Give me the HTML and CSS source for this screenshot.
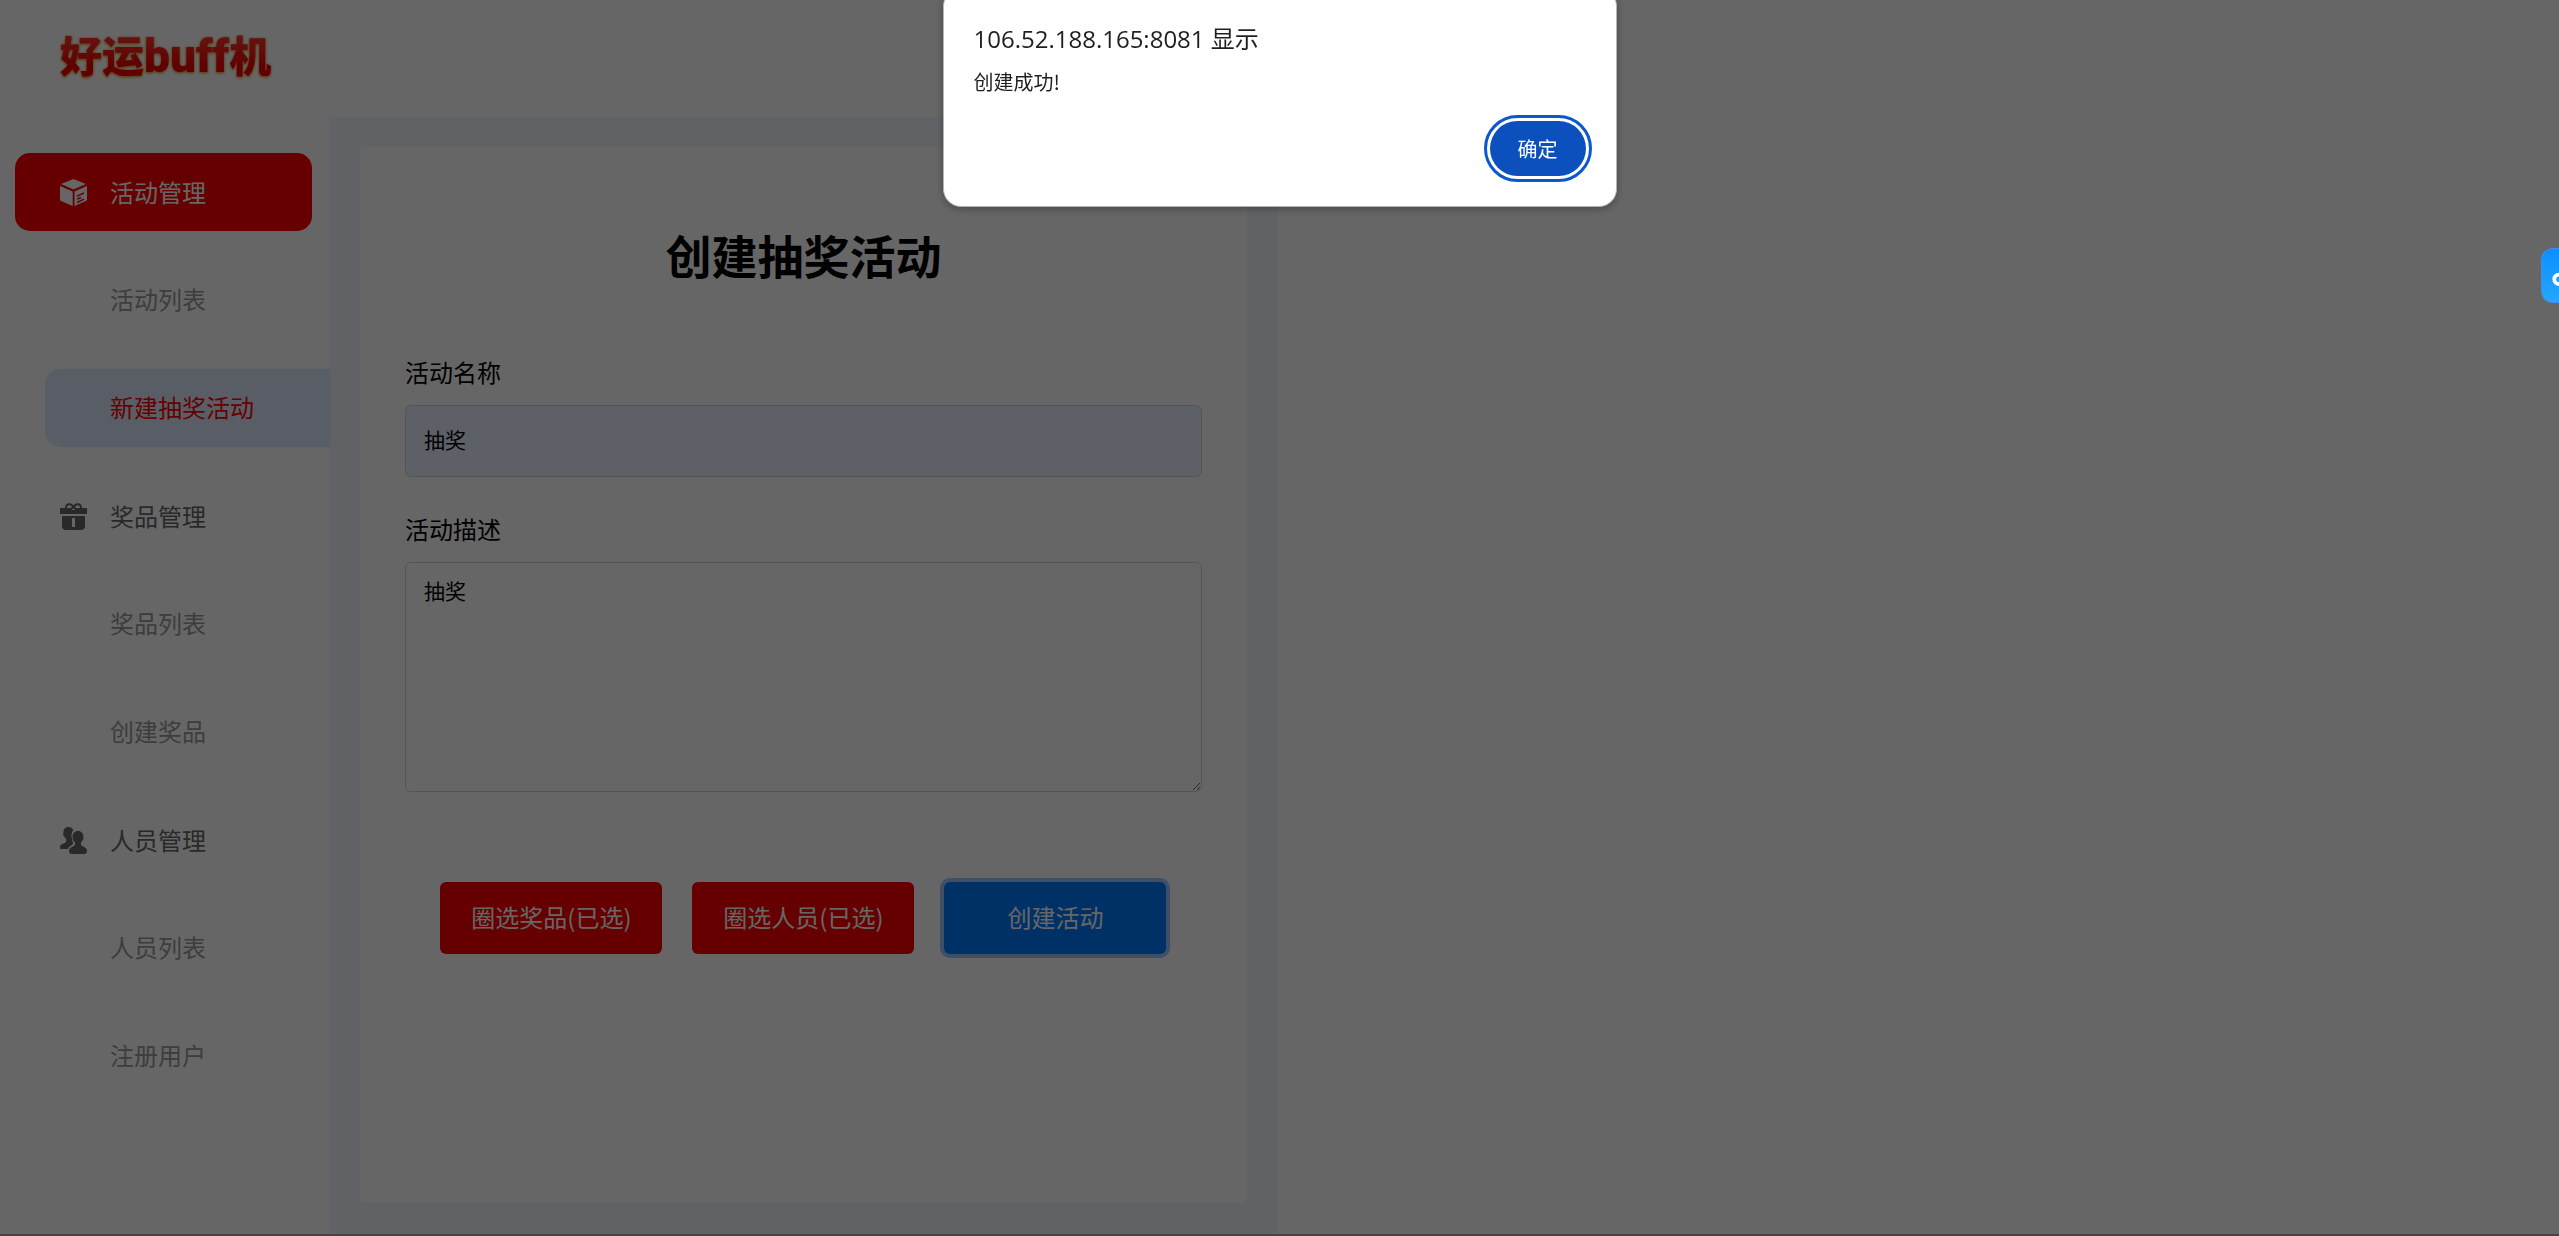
FILE: index.html
```html
<!DOCTYPE html>
<html lang="zh-CN">
<head>
  <meta charset="UTF-8">
  <meta name="viewport" content="width=device-width, initial-scale=1.0">
  <title>好运buff机</title>
  <link rel="stylesheet" href="styles.css">
</head>
<body>
<div class="page">
  <header class="header">
    <span class="logo">好运<b>buff</b>机</span>
  </header>
  <div class="container">
    <nav class="sidebar">
      <a href="#" class="nav-item active">
        <svg class="nav-icon" viewBox="0 0 27 27">
          <path d="M13.500 0 26 5 13.500 10.500 1 5Z"/>
          <path d="M0 7 12.700 12.400V27L0 21.500Z"/>
          <path d="M14.500 12.400 27 7V21.500L14.500 27Z"/>
          <path class="cut" d="M17 17.200 24 14M17 20.200 21 18.500M17 23.500 24 20.200"/>
        </svg>
        活动管理
      </a>
      <a href="#" class="nav-item sub">活动列表</a>
      <a href="#" class="nav-item sub current">新建抽奖活动</a>
      <a href="#" class="nav-item">
        <svg class="nav-icon" viewBox="0 0 27 27">
          <path class="bow" d="M13.500 5C12 0 6 0 6 5M13.500 5C15 0 21 0 21 5M13.500 4 10 7M13.500 4 17 7"/>
          <path d="M0 5H12V11H0ZM15 5H27V11H15ZM12 7H15V11H12Z"/>
          <path fill-rule="evenodd" d="M2 13H25V23Q25 27 21 27H6Q2 27 2 23ZM12 15V24H15V15Z"/>
        </svg>
        奖品管理
      </a>
      <a href="#" class="nav-item sub">奖品列表</a>
      <a href="#" class="nav-item sub">创建奖品</a>
      <a href="#" class="nav-item">
        <svg class="nav-icon" viewBox="0 0 27 27">
          <path d="M8.500 0C11 0 12.500 1 13.300 3 11.500 5 11 8 12 12 12.300 14 12.800 15 13.200 16 13 18 9 19 8 22H1C0 22 0 21 0 20 0 17 3 17 5.500 15.500 6.500 15 6.500 13 6 12 4 9 2.500 8 3.500 5 3.500 2 5.500 0 8.500 0Z"/>
          <path d="M18 4C21.500 4 23.500 6.500 23.500 10 23.500 12.500 22.500 14 21 15.500 20.500 18 21 18.500 23 19.500 25.500 20.500 27 21.500 27 24 27 26 26 27 24 27H12C10 27 9 26 9 24 9 21.500 10.500 20.500 13 19.500 15 18.500 15.500 18 15 15.500 13.500 14 12.500 12.500 12.500 10 12.500 6.500 14.500 4 18 4Z"/>
        </svg>
        人员管理
      </a>
      <a href="#" class="nav-item sub">人员列表</a>
      <a href="#" class="nav-item sub">注册用户</a>
    </nav>
    <main class="content">
      <form class="card">
        <h2>创建抽奖活动</h2>
        <div class="form-group">
          <label for="activityName">活动名称</label>
          <input type="text" id="activityName" value="抽奖">
        </div>
        <div class="form-group">
          <label for="description">活动描述</label>
          <textarea id="description">抽奖</textarea>
        </div>
        <div class="btn-group">
          <button type="button" class="btn btn-red">圈选奖品(已选)</button>
          <button type="button" class="btn btn-red">圈选人员(已选)</button>
          <button type="button" class="btn btn-blue">创建活动</button>
        </div>
      </form>
    </main>
  </div>
</div>

<div class="mask"></div>

<dialog class="alert" open>
  <h1>106.52.188.165:8081 显示</h1>
  <p>创建成功!</p>
  <button type="button" class="alert-ok">确定</button>
</dialog>

<button type="button" class="float-btn" aria-label="助手">
  <svg viewBox="0 0 18 54">
    <circle cx="18" cy="31" r="5"/>
  </svg>
</button>
</body>
</html>
```
FILE: styles.css
```css
* {
  box-sizing: border-box;
  margin: 0;
  padding: 0;
}
body {
  font-family: "Noto Sans CJK SC", sans-serif;
  font-size: 24px;
  line-height: 36px;
  background: #fff;
  overflow: hidden;
}
button, input, textarea {
  font-family: inherit;
}
.page {
  display: flex;
  flex-direction: column;
  min-height: 100vh;
  border-bottom: 2px solid #b2a8ad;
}
.header {
  display: flex;
  align-items: center;
  height: 117px;
  padding: 0 60px 8px;
}
.logo {
  font-size: 42px;
  font-weight: 900;
  line-height: 60px;
  color: transparent;
  background: linear-gradient(#ff3030 20%, #f00000 70%);
  -webkit-background-clip: text;
  background-clip: text;
  filter: drop-shadow(0 1px 1px #e8a040) drop-shadow(0 0 1px #e8b060);
}
.logo b {
  font-family: Roboto, sans-serif;
  font-size: 46px;
  font-weight: 900;
}
.container {
  display: flex;
  flex: 1;
}

/* left menu */
.sidebar {
  display: flex;
  flex-direction: column;
  gap: 30px;
  width: 330px;
  padding-top: 36px;
}
.nav-item {
  display: flex;
  align-items: center;
  gap: 23px;
  height: 78px;
  margin: 0 18px 0 15px;
  padding-left: 45px;
  border-radius: 15px;
  color: #666;
  text-decoration: none;
}
.nav-item.active {
  background: #ff0000;
  color: #fff;
}
.nav-item.sub {
  margin: 0 0 0 45px;
  padding: 0 0 2px 65px;
  border-radius: 15px 0 0 15px;
  color: #999;
}
.nav-item.current {
  background: #deebff;
  color: #ff0000;
}
.nav-icon {
  width: 27px;
  height: 27px;
  fill: currentColor;
}
.nav-icon .cut {
  fill: none;
  stroke: #ff0000;
  stroke-width: 1.4;
}
.nav-icon .bow {
  fill: none;
  stroke: currentColor;
  stroke-width: 2;
}

/* form */
.content {
  display: flex;
  width: 37vw;
  margin-bottom: 1px;
  padding: 30px;
  background: #f3f6ff;
}
.card {
  flex: 1;
  padding: 80px 45px 0;
  background: #fff;
  border-radius: 6px;
}
.card h2 {
  margin-bottom: 73px;
  font-size: 46px;
  line-height: 54px;
  text-align: center;
}
.form-group {
  margin-bottom: 34px;
}
.form-group label {
  display: block;
  margin-bottom: 15px;
}
.form-group input,
.form-group textarea {
  display: block;
  width: 100%;
  padding: 11px 18px;
  border: 1px solid #ced4da;
  border-radius: 6px;
  font-size: 21px;
  line-height: 32px;
}
.form-group input {
  height: 72px;
  padding-bottom: 15px;
  background: #e8f0fe;
}
.form-group textarea {
  height: 230px;
  resize: vertical;
}
.btn-group {
  display: flex;
  justify-content: center;
  gap: 30px;
  padding-top: 56px;
}
.btn {
  width: 222px;
  height: 72px;
  padding-bottom: 4px;
  border: none;
  border-radius: 6px;
  font-size: 24px;
  color: #fff;
}
.btn-red {
  background: #ff0000;
}
.btn-blue {
  background: #007bff;
  box-shadow: 0 0 0 4px #9bc6ff;
}

/* browser alert */
.mask {
  position: fixed;
  inset: 0;
  background: rgba(0, 0, 0, 0.6);
}
.alert {
  position: fixed;
  top: -12px;
  width: 674px;
  margin: 0 auto;
  padding: 32px 30px 30px;
  border: 1px solid #b4b4b4;
  border-radius: 18px;
  background: #fff;
  box-shadow: 0 2px 8px rgba(0, 0, 0, 0.3);
  color: #1f1f1f;
}
.alert h1 {
  font-family: "Open Sans", "Noto Sans CJK SC", sans-serif;
  font-size: 24px;
  font-weight: 400;
  line-height: 36px;
}
.alert p {
  margin-top: 10px;
  font-size: 20px;
  line-height: 30px;
}
.alert-ok {
  display: block;
  width: 96px;
  height: 55px;
  margin: 24px 0 0 auto;
  border: none;
  border-radius: 28px;
  outline: 3px solid #0b57d0;
  outline-offset: 3px;
  background: #0b50bc;
  font-size: 20px;
  color: #fff;
}

.float-btn {
  position: fixed;
  top: 248px;
  right: 0;
  width: 18px;
  height: 55px;
  border: 1px solid #3d8bff;
  border-right: none;
  border-radius: 12px 0 0 12px;
  background: linear-gradient(#0a90ff, #27a5ff);
}
.float-btn svg {
  display: block;
  width: 100%;
  fill: none;
  stroke: #fff;
  stroke-width: 4;
}
```
